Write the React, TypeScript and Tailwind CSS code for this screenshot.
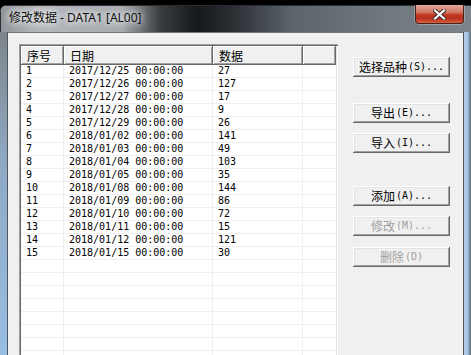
import React from 'react';

const rows: [string, string, string][] = [
  ['1', '2017/12/25 00:00:00', '27'],
  ['2', '2017/12/26 00:00:00', '127'],
  ['3', '2017/12/27 00:00:00', '17'],
  ['4', '2017/12/28 00:00:00', '9'],
  ['5', '2017/12/29 00:00:00', '26'],
  ['6', '2018/01/02 00:00:00', '141'],
  ['7', '2018/01/03 00:00:00', '49'],
  ['8', '2018/01/04 00:00:00', '103'],
  ['9', '2018/01/05 00:00:00', '35'],
  ['10', '2018/01/08 00:00:00', '144'],
  ['11', '2018/01/09 00:00:00', '86'],
  ['12', '2018/01/10 00:00:00', '72'],
  ['13', '2018/01/11 00:00:00', '15'],
  ['14', '2018/01/12 00:00:00', '121'],
  ['15', '2018/01/15 00:00:00', '30'],
];

const emptyRows = Array.from({ length: 9 }, () => ['', '', ''] as [string, string, string]);

const cjk = "font-['Noto_Sans_CJK_SC',sans-serif]";
const mono = "font-['DejaVu_Sans_Mono',monospace]";

const headerCell =
  'h-full flex items-center pl-[6px] bg-[#f0f0f0] text-[12px] leading-none text-black shadow-[inset_-1px_-1px_#696969,inset_1px_1px_#ffffff,inset_-2px_-2px_#a0a0a0]';

const Button: React.FC<{ label: string; hint: string; dots?: boolean; disabled?: boolean; className?: string }> = ({
  label,
  hint,
  dots = true,
  disabled = false,
  className = '',
}) => (
  <div
    className={`h-[20px] w-[97px] flex items-center justify-center bg-[#f0f0f0] shadow-[inset_-1px_-1px_#696969,inset_1px_1px_#ffffff,inset_-2px_-2px_#a0a0a0,inset_2px_2px_#e3e3e3] ${
      disabled ? 'text-[#a0a0a0]' : 'text-black'
    } ${className}`}
  >
    <span className={`${cjk} text-[12px] leading-none`}>{label}</span>
    <span className={`${mono} text-[10px] leading-none ml-[1px]`}>
      ({hint}){dots ? '...' : ''}
    </span>
  </div>
);

export default function App() {
  return (
    <div className="w-[471px] h-[355px] overflow-hidden bg-black">
      <div className="mt-[5px] w-[471px] rounded-tl-[7px] overflow-hidden">
        {/* Title bar */}
        <div className="h-[27px] flex justify-between shadow-[inset_1px_1px_#2a2e33] bg-[linear-gradient(90deg,#8d9398_0%,#b3b7bb_8%,#a7abaf_26%,#3a3d40_34%,#16191c_42%,#2c3136_50%,#5c636b_62%,#6f767e_80%,#7b838b_100%)]">
          <div
            className={`pl-[9px] pt-[6px] text-[12px] leading-[14px] text-[#111] font-['Noto_Sans','Noto_Sans_CJK_SC',sans-serif] [text-shadow:0_0_6px_#ffffff,0_0_10px_#ffffff]`}
          >
            修改数据 - DATA1 [AL00]
          </div>
          <div className="mr-[7px] w-[49px] h-[19px] rounded-b-[4px] border border-t-0 border-[#46231c] flex items-center justify-center bg-[linear-gradient(180deg,#e2a698_0%,#d27766_40%,#c1371f_55%,#b93020_75%,#d8603e_100%)] shadow-[0_0_0_1px_rgba(255,255,255,0.25)]">
            <svg width="13" height="11" viewBox="0 0 13 11">
              <path d="M2 1.5 L11 9.5 M11 1.5 L2 9.5" stroke="#3b2a28" strokeWidth="4" strokeLinecap="square" />
              <path d="M2 1.5 L11 9.5 M11 1.5 L2 9.5" stroke="#ffffff" strokeWidth="2.2" strokeLinecap="square" />
            </svg>
          </div>
        </div>

        {/* Body */}
        <div className="flex h-[323px]">
          <div className="w-[8px] border-r border-[#4e565e] bg-[linear-gradient(180deg,#7e858b_0%,#8fa9c4_40%,#98bde3_100%)]" />
          <div className="w-[455px] bg-[#f0f0f0] border-t border-[#6f777f] pl-[11px] pt-[11px] flex gap-[15px]">
            {/* List */}
            <div className="w-[319px] h-[330px] p-[2px] bg-white shadow-[inset_1px_1px_#a0a0a0,inset_2px_2px_#696969,inset_-1px_-1px_#ffffff,inset_-2px_-2px_#e3e3e3]">
              <div className={`h-[19px] flex ${cjk}`}>
                <div className={`${headerCell} w-[43px]`}>序号</div>
                <div className={`${headerCell} w-[149px]`}>日期</div>
                <div className={`${headerCell} w-[90px]`}>数据</div>
                <div className={`${headerCell} flex-1`} />
              </div>
              {[...rows, ...emptyRows].map(([n, d, v], i) => (
                <div key={i} className={`h-[13px] flex border-b border-[#efefef] ${mono} text-[10px] leading-[12px] text-black`}>
                  <div className="w-[43px] pl-[5px] border-r border-[#efefef]">{n}</div>
                  <div className="w-[149px] pl-[5px] border-r border-[#efefef] whitespace-pre">{d}</div>
                  <div className="w-[90px] pl-[5px] border-r border-[#efefef]">{v}</div>
                  <div className="flex-1" />
                </div>
              ))}
            </div>

            {/* Buttons */}
            <div className="w-[97px] flex flex-col">
              <Button label="选择品种" hint="S" className="mt-[13px]" />
              <Button label="导出" hint="E" className="mt-[26px]" />
              <Button label="导入" hint="I" className="mt-[10px]" />
              <Button label="添加" hint="A" className="mt-[33px]" />
              <Button label="修改" hint="M" disabled className="mt-[10px]" />
              <Button label="删除" hint="D" dots={false} disabled className="mt-[11px]" />
            </div>
          </div>
          <div className="w-[8px] border-l border-[#4e565e] bg-[linear-gradient(90deg,#b3cdea_0%,#a6c4e6_50%,#5d6873_100%)]" />
        </div>
      </div>
    </div>
  );
}
